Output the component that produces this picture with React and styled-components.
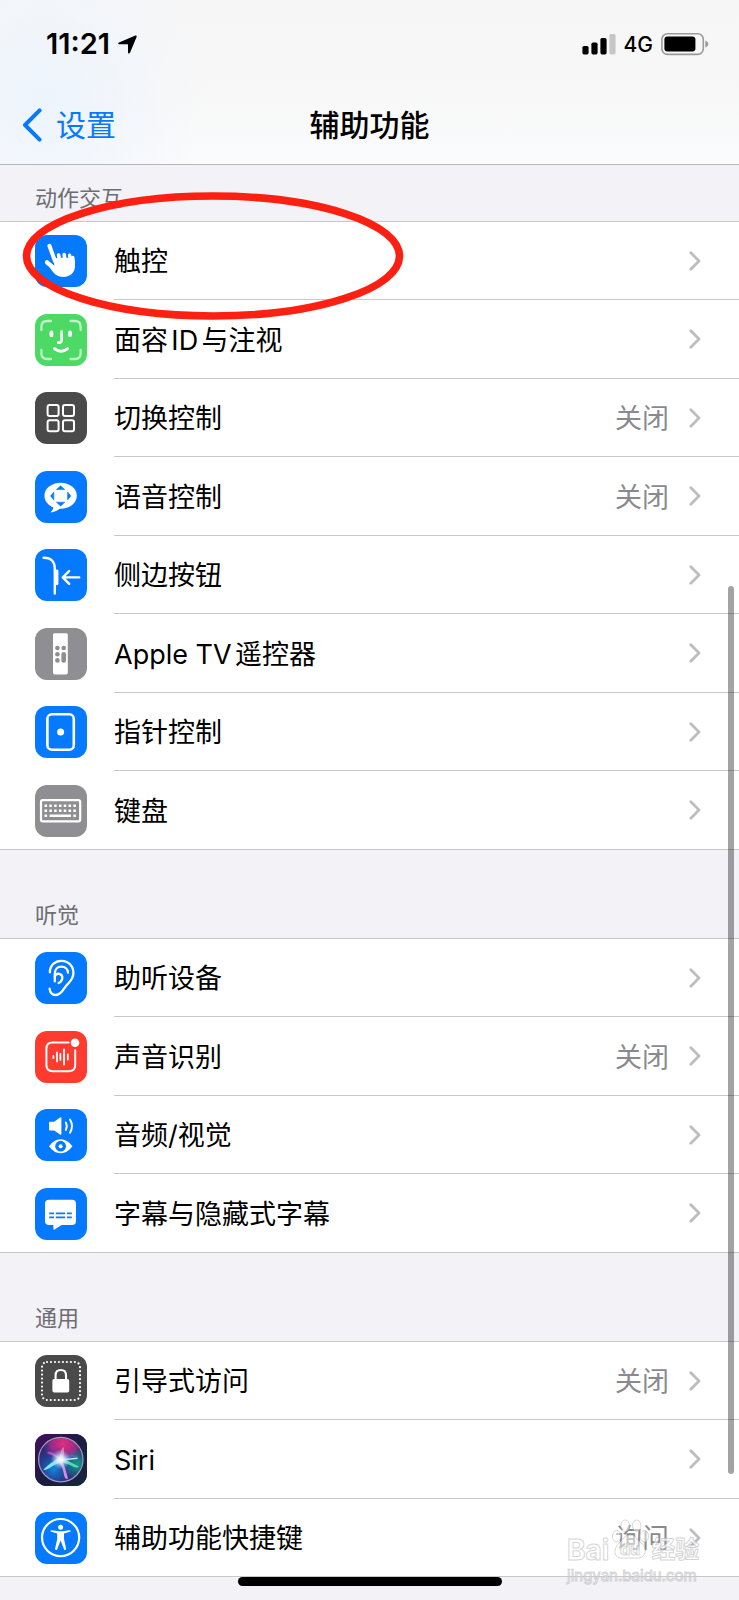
import React from 'react';
import styled, { createGlobalStyle } from 'styled-components';

const colors = {
    blue: '#067aff',
    green: '#4cd964',
    red: '#ff3b30',
    dark: '#4a4a4a',
    grey: '#8e8e93',
    page: '#f2f2f7',
    line: '#c8c8cb',
    label: '#6d6d72',
    value: '#8a8a8e',
    chevron: '#bdbdc0',
    marker: '#fb2012',
};

const GlobalStyle = createGlobalStyle`
    * {
        box-sizing: border-box;
    }
    body {
        margin: 0;
        background-color: ${colors.page};
        font-family: Inter, 'Noto Sans CJK SC', sans-serif;
        text-autospace: normal;
        color: #000;
    }
`;

const TouchIcon = () => (
    <g stroke="#fff" strokeLinecap="round" fill="#fff">
        <path d="M14.4 10.8L20 26" strokeWidth="4" />
        <path d="M12 27.4L20 34" strokeWidth="4.4" />
        <path d="M23.6 20L25 27M29.2 19.6L30 27" strokeWidth="3.6" />
        <path d="M34.6 20.2L35.6 27M37.8 22.4L38.4 28" strokeWidth="3.4" />
        <path
            d="M18.4 24C22 22.6 36 22 38.6 24.5C39.6 26.5 40 28.5 40 31C40 38 34.5 42 28.5 42C22 42 18.5 38.5 14.5 32L19.4 30.4Z"
            stroke="none"
        />
    </g>
);

const FaceIcon = () => (
    <g stroke="#fff" strokeLinecap="round" fill="none">
        <path
            d="M6.4 16V12.5Q6.4 7 12 7H16M35.5 7H40Q45.6 7 45.6 12.5V16M45.6 36V39.5Q45.6 45 40 45H35.5M16 45H12Q6.4 45 6.4 39.5V36"
            strokeWidth="2.3"
            strokeOpacity="0.65"
        />
        <path d="M16.4 18.4V21.2M35 18.4V21.2" strokeWidth="3.8" />
        <path d="M26.6 17.6V26Q26.6 28.6 24 28.6H23.2" strokeWidth="2.6" />
        <path d="M19.4 34.6Q26 40 32.6 34.6" strokeWidth="2.9" />
    </g>
);

const SwitchIcon = () => (
    <g stroke="#fff" strokeWidth="2" fill="none">
        <rect x="12.6" y="12.9" width="11" height="11" rx="2" />
        <rect x="28" y="12.9" width="11" height="11" rx="2" />
        <rect x="12.6" y="28.2" width="11" height="11" rx="2" />
        <rect x="28" y="28.2" width="11" height="11" rx="2" />
    </g>
);

const VoiceIcon = () => (
    <g>
        <ellipse cx="25.6" cy="24.8" rx="16.2" ry="13" fill="#fff" />
        <path d="M15 33L18.5 36.5Q17.8 39.5 15.4 41.4Q21.5 41 25.5 37Z" fill="#fff" />
        <path
            d="M25.6 14.8L29.8 18.6H21.4ZM25.6 35L29.8 31.2H21.4ZM15.6 25L18.8 21V29ZM35.8 25L32.6 21V29Z"
            fill={colors.blue}
            stroke={colors.blue}
            strokeWidth="0.6"
            strokeLinejoin="round"
        />
    </g>
);

const SideButtonIcon = () => (
    <g stroke="#fff" strokeWidth="2.4" fill="none" strokeLinecap="round" strokeLinejoin="round">
        <path d="M8.6 8.8Q19.8 8.6 19.8 20V44.6" />
        <path d="M22 21.8V34.8" strokeWidth="2.8" />
        <path d="M44.2 28.4H27.8M34.2 22L27.8 28.4L34.2 34.8" />
    </g>
);

const RemoteIcon = () => (
    <g fill={colors.grey}>
        <rect x="18" y="5.2" width="14.8" height="41.2" rx="1.6" fill="#fff" />
        <circle cx="22.4" cy="20" r="2.3" />
        <circle cx="28.7" cy="20" r="2.3" />
        <circle cx="22.4" cy="26.2" r="2.3" />
        <circle cx="22.4" cy="32.4" r="2.3" />
        <rect x="26.4" y="24" width="4.6" height="10.8" rx="2.3" />
    </g>
);

const PointerIcon = () => (
    <g>
        <rect x="12.4" y="8.2" width="26.4" height="35.6" rx="4.6" fill="none" stroke="#fff" strokeWidth="2.6" />
        <circle cx="25.6" cy="26" r="3.5" fill="#fff" />
    </g>
);

const KEY_COLUMNS = [10.8, 15.6, 20.4, 25.2, 30, 34.8, 39.6];

const KeyboardIcon = () => (
    <g fill="#fff">
        <rect x="6" y="15.2" width="39.2" height="21.2" rx="1.8" fill="none" stroke="#fff" strokeWidth="2.2" />
        {KEY_COLUMNS.map((x) => (
            <path key={x} d={`M${x - 1.3} 19.4h2.6v2.6h-2.6zM${x - 1.3} 24.4h2.6v2.6h-2.6z`} />
        ))}
        <path d="M9.5 29.4h2.6v2.6h-2.6zM38.3 29.4h2.6v2.6h-2.6zM14.6 29.6h21.4v2.4h-21.4z" />
    </g>
);

const EarIcon = () => (
    <g stroke="#fff" strokeWidth="2.3" fill="none" strokeLinecap="round">
        <path d="M14.8 20.4C15 13 20 8.8 26.4 8.8C33.4 8.8 38.4 14 38.4 21C38.4 28.6 33.6 29.8 29.4 36.2C26.4 41 24.4 43 20.8 43C17.4 43 15 40.4 14.6 36.6" />
        <path d="M19.8 29.4V21.6C19.8 17.4 22.4 14.6 26.4 14.6C30.2 14.6 32.8 17.2 33 20.6" />
        <path d="M19.8 24.4Q20.4 21.4 24 21.8Q28 22.6 27.2 26.8Q26.4 30 23.6 31" />
    </g>
);

const SoundIcon = () => (
    <g stroke="#fff" fill="none" strokeLinecap="round">
        <path
            d="M33.6 11.6H17.6Q11.4 11.6 11.4 17.8V34Q11.4 40.2 17.6 40.2H34Q40.2 40.2 40.2 34V19"
            strokeWidth="2"
        />
        <path d="M18.4 25V27M22 21.4V30.6M25.4 23V29M29 18.4V33.6M32.8 23.4V28.6" strokeWidth="1.8" />
        <circle cx="40" cy="11.8" r="4.3" fill="#fff" stroke="none" />
    </g>
);

const AudioVisualIcon = () => (
    <g>
        <path d="M14 13.8Q14 12.8 15 12.8H19.2L25 8.5Q26.4 7.8 26.4 9.4V24.8Q26.4 26.4 25 25.6L19.2 21.6H15Q14 21.6 14 20.6Z" fill="#fff" />
        <path
            d="M30.8 13.4Q32.8 17.2 30.8 21M35 10.6Q39 17.2 35 23.8"
            stroke="#fff"
            strokeWidth="1.9"
            fill="none"
            strokeLinecap="round"
        />
        <path d="M14 37.2Q19 30.2 25.6 30.2Q32.4 30.2 37.4 37.2Q32.4 44.2 25.6 44.2Q19 44.2 14 37.2Z" fill="#fff" />
        <circle cx="25.6" cy="37.2" r="5.4" fill={colors.blue} />
        <circle cx="25.6" cy="37.2" r="2" fill="#fff" />
    </g>
);

const CaptionIcon = () => (
    <g>
        <path
            d="M14 11.8H37Q41 11.8 41 15.8V33Q41 37 37 37H26.6L19.6 41.6Q18.4 42.2 18.4 40.8V37H14Q10 37 10 33V15.8Q10 11.8 14 11.8Z"
            fill="#fff"
        />
        <path
            d="M14.2 25.4H19M20.8 25.4H30.2M32 25.4H36.8M14.2 29.4H19M20.8 29.4H30.2M32 29.4H36.8"
            stroke={colors.blue}
            strokeWidth="1.8"
        />
    </g>
);

const GuidedIcon = () => (
    <g>
        <rect
            x="7"
            y="7"
            width="38"
            height="38"
            rx="5"
            fill="none"
            stroke="#fff"
            strokeWidth="2.2"
            strokeLinecap="round"
            strokeDasharray="0 3.98"
        />
        <rect x="17.4" y="24" width="16.8" height="13.6" rx="1.8" fill="#fff" />
        <path d="M20.6 25V20.4Q20.6 15 25.8 15Q31 15 31 20.4V25" fill="none" stroke="#fff" strokeWidth="2.1" />
    </g>
);

const SiriIcon = () => (
    <g>
        <defs>
            <linearGradient id="siriBase" x1="0" y1="0" x2="1" y2="1">
                <stop offset="0" stopColor="#451060" />
                <stop offset="0.5" stopColor="#1b1c40" />
                <stop offset="1" stopColor="#16283c" />
            </linearGradient>
            <radialGradient id="siriPink" cx="0.56" cy="0.14" r="0.48">
                <stop offset="0" stopColor="#e22c7c" />
                <stop offset="0.6" stopColor="#b52c8a" stopOpacity="0.8" />
                <stop offset="1" stopColor="#7a2a90" stopOpacity="0" />
            </radialGradient>
            <radialGradient id="siriBlue" cx="0.34" cy="0.72" r="0.52">
                <stop offset="0" stopColor="#1488e0" />
                <stop offset="1" stopColor="#1f3c9a" stopOpacity="0" />
            </radialGradient>
            <radialGradient id="siriTeal" cx="0.88" cy="0.6" r="0.36">
                <stop offset="0" stopColor="#139c8a" />
                <stop offset="1" stopColor="#139c8a" stopOpacity="0" />
            </radialGradient>
            <radialGradient id="siriGlow">
                <stop offset="0" stopColor="#fff" />
                <stop offset="0.35" stopColor="#e6f4ff" stopOpacity="0.85" />
                <stop offset="1" stopColor="#9ac8ff" stopOpacity="0" />
            </radialGradient>
        </defs>
        <rect width="52" height="52" fill="url(#siriBase)" />
        <circle cx="25.8" cy="25.6" r="22" fill="#2b2c74" />
        <circle cx="25.8" cy="25.6" r="22" fill="url(#siriPink)" />
        <circle cx="25.8" cy="25.6" r="22" fill="url(#siriBlue)" />
        <circle cx="25.8" cy="25.6" r="22" fill="url(#siriTeal)" />
        <path d="M25 25Q16 15 12 19Q17 21 25 25Z" fill="#c65cc4" fillOpacity="0.8" />
        <path d="M25 25Q25 14 29 13Q29.6 20 28 26Z" fill="#f08ac8" fillOpacity="0.75" />
        <path d="M27 25Q36 17 44.5 23Q36 22 27 27Z" fill="#5868c8" fillOpacity="0.8" />
        <path d="M25 23.5Q16 28 8.4 35.6Q10 37.4 17 32.6Q23 29 28 27.5Z" fill="#7fe8f6" />
        <path d="M27 23.8Q35 28 43.8 32.6Q42.5 35 35 31Q29 29.4 26 27.5Z" fill="#4ae0b6" />
        <path d="M26.6 25Q30.6 34 33 44.4Q30.6 46.4 29.2 42Q28 33 23 26.5Z" fill="#d98be0" />
        <path d="M25 26L42.5 24.2" stroke="#b9f0f0" strokeWidth="1.6" />
        <circle cx="25.6" cy="25.4" r="10" fill="url(#siriGlow)" />
        <circle cx="25.8" cy="25.6" r="22.2" fill="none" stroke="#a29ac4" strokeWidth="1.2" />
    </g>
);

const AccessibilityIcon = () => (
    <g>
        <circle cx="25.6" cy="25.6" r="18.6" fill="none" stroke="#fff" strokeWidth="2.2" />
        <circle cx="25.6" cy="15.2" r="2.5" fill="#fff" />
        <path
            d="M16.6 18.2L23.6 19.2H27.6L34.6 18.2Q35.8 18.2 35.6 19.6L29 21.4V27L31.2 37Q30.6 38.6 29.2 37.8L25.6 28.6L22 37.8Q20.6 38.6 20 37L22.2 27V21.4L15.6 19.6Q15.4 18.2 16.6 18.2Z"
            fill="#fff"
        />
    </g>
);

const SECTIONS = [
    {
        title: '动作交互',
        items: [
            { name: '触控', icon: TouchIcon, color: colors.blue },
            { name: '面容ID与注视', icon: FaceIcon, color: colors.green },
            { name: '切换控制', icon: SwitchIcon, color: colors.dark, value: '关闭' },
            { name: '语音控制', icon: VoiceIcon, color: colors.blue, value: '关闭' },
            { name: '侧边按钮', icon: SideButtonIcon, color: colors.blue },
            { name: 'Apple TV遥控器', icon: RemoteIcon, color: colors.grey },
            { name: '指针控制', icon: PointerIcon, color: colors.blue },
            { name: '键盘', icon: KeyboardIcon, color: colors.grey },
        ],
    },
    {
        title: '听觉',
        items: [
            { name: '助听设备', icon: EarIcon, color: colors.blue },
            { name: '声音识别', icon: SoundIcon, color: colors.red, value: '关闭' },
            { name: '音频/视觉', icon: AudioVisualIcon, color: colors.blue },
            { name: '字幕与隐藏式字幕', icon: CaptionIcon, color: colors.blue },
        ],
    },
    {
        title: '通用',
        items: [
            { name: '引导式访问', icon: GuidedIcon, color: colors.dark, value: '关闭' },
            { name: 'Siri', icon: SiriIcon, color: '#1b1c40' },
            { name: '辅助功能快捷键', icon: AccessibilityIcon, color: colors.blue, value: '询问' },
        ],
    },
];

const StatusIcons = () => (
    <StatusGroup>
        <svg width="34" height="22" viewBox="0 0 34 22" aria-hidden="true">
            <rect x="0.4" y="13" width="6.2" height="8.4" rx="1.6" />
            <rect x="9.4" y="9.6" width="6.2" height="11.8" rx="1.6" />
            <rect x="18.4" y="5" width="6.2" height="16.4" rx="1.6" />
            <rect x="27.4" y="1" width="6.2" height="20.4" rx="1.6" fill="#c6c6c6" />
        </svg>
        <NetworkText>4G</NetworkText>
        <svg width="48" height="24" viewBox="0 0 48 24" aria-hidden="true">
            <rect x="0.9" y="1.8" width="41.4" height="20.6" rx="5.6" fill="none" stroke="#9b9b9b" strokeWidth="1.6" />
            <rect x="3.4" y="4.6" width="31" height="15" rx="3" />
            <path d="M44.4 8.4Q47.4 9.6 47.4 12.1Q47.4 14.6 44.4 15.8Z" fill="#9b9b9b" />
        </svg>
    </StatusGroup>
);

const SettingRow = ({ item }) => {
    const Icon = item.icon;
    return (
        <Row>
            <RowLink href="#">
                <IconTile viewBox="0 0 52 52" $color={item.color} aria-hidden="true">
                    <Icon />
                </IconTile>
                <RowBody>
                    <RowName>{item.name}</RowName>
                    {item.value && <RowValue>{item.value}</RowValue>}
                    <Chevron viewBox="0 0 12 20" aria-hidden="true">
                        <path d="M1.8 1.8L10 10L1.8 18.2" />
                    </Chevron>
                </RowBody>
            </RowLink>
        </Row>
    );
};

const App = () => (
    <Screen>
        <GlobalStyle />
        <Header>
            <StatusBar>
                <Clock>
                    11:21
                    <svg width="19" height="19" viewBox="0 0 19 19" aria-hidden="true">
                        <path d="M17.4 0.6Q19 0.2 18.6 1.9L12 17.8Q10.6 19.6 10 17.4V9.6Q10 9.2 9.4 9.2H1.2Q-0.8 8.6 1 7.4Z" />
                    </svg>
                </Clock>
                <StatusIcons />
            </StatusBar>
            <NavBar>
                <BackLink href="#">
                    <svg width="20" height="34" viewBox="0 0 20 34" aria-hidden="true">
                        <path d="M17.6 2.4L3 17L17.6 31.6" />
                    </svg>
                    设置
                </BackLink>
                <Title>辅助功能</Title>
            </NavBar>
        </Header>
        <main>
            {SECTIONS.map((section) => (
                <Section key={section.title}>
                    <SectionTitle>{section.title}</SectionTitle>
                    <List>
                        {section.items.map((item) => (
                            <SettingRow key={item.name} item={item} />
                        ))}
                    </List>
                </Section>
            ))}
        </main>
        <Footer>
            <HomeIndicator />
        </Footer>
        <ScrollThumb />
        <Marker viewBox="0 0 382 130" aria-hidden="true">
            <ellipse cx="191" cy="65" rx="186.5" ry="60" />
        </Marker>
        <Watermark>
            <WatermarkBrand>
                Bai
                <svg width="38" height="44" viewBox="0 0 40 44" aria-hidden="true">
                    <ellipse cx="6" cy="18" rx="4.5" ry="6" />
                    <ellipse cx="15" cy="7" rx="4.5" ry="6" />
                    <ellipse cx="27" cy="7" rx="4.5" ry="6" />
                    <ellipse cx="35" cy="18" rx="4.5" ry="6" />
                    <path d="M20 17Q26 17 28 22Q37 28 36 35Q34 42 26 41H14Q5 42 4 35Q4 28 12 22Q14 17 20 17Z" />
                    <text x="20" y="38" textAnchor="middle">
                        du
                    </text>
                </svg>
                <WatermarkName>经验</WatermarkName>
            </WatermarkBrand>
            <WatermarkUrl>jingyan.baidu.com</WatermarkUrl>
        </Watermark>
    </Screen>
);

const Screen = styled.div`
    position: relative;
    width: 100%;
    min-height: 100vh;
    overflow: hidden;
    background-color: ${colors.page};
`;

const Header = styled.header`
    border-bottom: 1px solid #b8b8bb;
    background: radial-gradient(circle at 6% 60%, #edf4fd 0, rgba(240, 246, 253, 0) 160px),
        linear-gradient(#f6f6f7, #f8f8f8 60%, #fafbfd);
`;

const StatusBar = styled.div`
    display: flex;
    align-items: center;
    justify-content: space-between;
    height: 88px;
    padding: 0 30px 0 46px;
`;

const Clock = styled.div`
    display: flex;
    align-items: center;
    gap: 8px;
    font-size: 29px;
    font-weight: 600;
    line-height: 36px;
`;

const StatusGroup = styled.div`
    display: flex;
    align-items: center;
    gap: 8px;
`;

const NetworkText = styled.span`
    font-size: 21px;
    font-weight: 500;
    line-height: 28px;
    padding-top: 2px;
`;

const NavBar = styled.nav`
    display: grid;
    grid-template-columns: 1fr auto 1fr;
    align-items: center;
    height: 76px;
    padding: 0 22px 2px;
`;

const BackLink = styled.a`
    display: flex;
    align-items: center;
    gap: 14px;
    font-size: 30px;
    line-height: 40px;
    color: ${colors.blue};
    text-decoration: none;

    path {
        fill: none;
        stroke: ${colors.blue};
        stroke-width: 4;
        stroke-linecap: round;
        stroke-linejoin: round;
    }
`;

const Title = styled.h1`
    margin: 0;
    font-size: 30px;
    font-weight: 500;
    line-height: 40px;
`;

const Section = styled.section`
    & + & h2 {
        height: 88px;
    }
`;

const SectionTitle = styled.h2`
    display: flex;
    align-items: flex-end;
    height: 56px;
    margin: 0;
    padding: 0 35px 8px;
    font-size: 22px;
    font-weight: 400;
    line-height: 30px;
    color: ${colors.label};
`;

const List = styled.ul`
    margin: 0;
    padding: 0;
    list-style: none;
    border-top: 1px solid ${colors.line};
    border-bottom: 1px solid ${colors.line};
    background-color: #fff;
`;

const RowBody = styled.div`
    display: flex;
    flex: 1;
    align-items: center;
    height: 100%;
    padding-right: 38px;
    border-bottom: 1px solid ${colors.line};
`;

const Row = styled.li`
    height: 78px;

    &:nth-child(even) {
        height: 79px;
    }

    &:last-child {
        margin-bottom: -1px;
    }

    &:last-child ${RowBody} {
        border-bottom-color: transparent;
    }
`;

const RowLink = styled.a`
    display: flex;
    align-items: center;
    gap: 27px;
    height: 100%;
    padding-left: 35px;
    color: #000;
    text-decoration: none;
`;

const IconTile = styled.svg`
    flex: none;
    width: 52px;
    height: 52px;
    border-radius: 12px;
    background-color: ${(props) => props.$color};
`;

const RowName = styled.span`
    flex: 1;
    padding-top: 3px;
    font-size: 27px;
    line-height: 36px;
`;

const RowValue = styled.span`
    margin-right: 20px;
    padding-top: 3px;
    font-size: 27px;
    line-height: 36px;
    color: ${colors.value};
`;

const Chevron = styled.svg`
    width: 12px;
    height: 20px;
    fill: none;
    stroke: ${colors.chevron};
    stroke-width: 2.8;
    stroke-linecap: round;
    stroke-linejoin: round;
`;

const Footer = styled.footer`
    height: 23px;
`;

const HomeIndicator = styled.div`
    width: 264px;
    height: 9px;
    margin: 0 auto;
    border-radius: 5px;
    background-color: #000;
`;

const ScrollThumb = styled.div`
    position: absolute;
    top: 586px;
    right: 5px;
    width: 6px;
    height: 888px;
    border-radius: 3px;
    background-color: rgba(0, 0, 0, 0.36);
`;

const Marker = styled.svg`
    position: absolute;
    top: 191px;
    left: 22px;
    width: 382px;
    height: 130px;
    fill: none;
    stroke: ${colors.marker};
    stroke-width: 7.6;
    pointer-events: none;
`;

const Watermark = styled.div`
    position: absolute;
    right: 38px;
    bottom: 14px;
    width: 134px;
    color: rgba(255, 255, 255, 0.7);
    -webkit-text-stroke: 1px rgba(170, 170, 170, 0.5);
    pointer-events: none;
`;

const WatermarkBrand = styled.div`
    display: flex;
    align-items: flex-end;
    gap: 2px;
    font-size: 28px;
    font-weight: 700;
    line-height: 32px;

    svg {
        flex: none;
        margin-bottom: 4px;
        fill: rgba(255, 255, 255, 0.5);
        stroke: rgba(170, 170, 170, 0.5);
        font-size: 17px;
    }
`;

const WatermarkName = styled.span`
    font-size: 24px;
`;

const WatermarkUrl = styled.div`
    font-size: 15px;
    line-height: 20px;
`;

export default App;
